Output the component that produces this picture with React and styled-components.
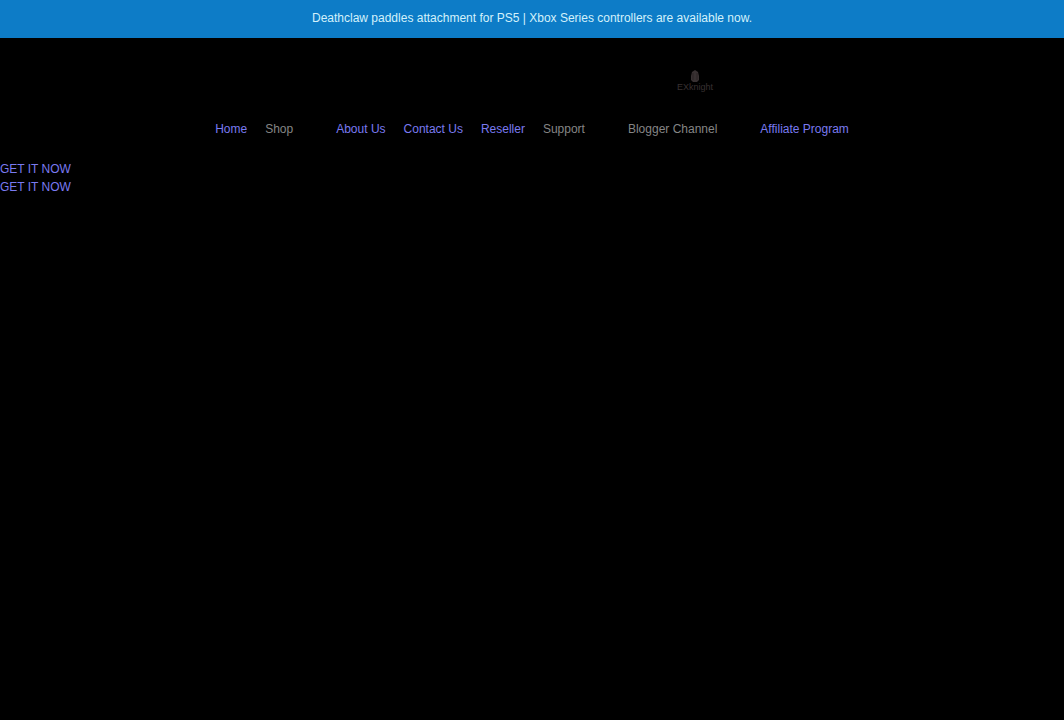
import React from 'react';
import styled, { createGlobalStyle } from 'styled-components';

const GlobalStyle = createGlobalStyle`
  * {
    box-sizing: border-box;
  }

  body {
    margin: 0;
    background: #000;
    font-family: 'Liberation Sans', Arial, sans-serif;
    font-size: 12px;
    line-height: 18px;
  }
`;

const Announcement = styled.p`
  margin: 0;
  padding: 9px 16px 11px;
  background: #0d7cc7;
  color: #d3f1fb;
  text-align: center;
`;

const Header = styled.header`
  padding: 32px 0 22px;
`;

const Brand = styled.div`
  display: grid;
  grid-template-columns: 4fr 9fr;
`;

const LogoLink = styled.a`
  grid-column: 2;
  justify-self: center;
`;

const LogoSvg = styled.svg`
  display: block;
  width: 42px;
  height: 24px;
  fill: #383132;

  text {
    font-family: 'Liberation Sans', Arial, sans-serif;
    font-size: 9px;
    text-anchor: middle;
  }

  .seam {
    fill: none;
    stroke: #1c1819;
    stroke-width: 0.5;
  }
`;

const NavList = styled.ul`
  display: flex;
  flex-wrap: wrap;
  justify-content: center;
  margin: 26px 0 0;
  padding: 0;
  list-style: none;
`;

const NavItem = styled.li`
  padding: 0 ${({ $menu }) => ($menu ? '34px' : '9px')} 0 9px;
`;

const NavLink = styled.a`
  color: #7a7af0;
  text-decoration: none;
`;

const MenuButton = styled.button`
  display: block;
  padding: 0;
  border: 0;
  background: none;
  color: #858585;
  font: inherit;
`;

const SlideLink = styled(NavLink)`
  display: block;
  width: fit-content;
`;

const NAV = [
  { label: 'Home' },
  { label: 'Shop', menu: true },
  { label: 'About Us' },
  { label: 'Contact Us' },
  { label: 'Reseller' },
  { label: 'Support', menu: true },
  { label: 'Blogger Channel', menu: true },
  { label: 'Affiliate Program' }
];

const Logo = () => (
  <LogoSvg viewBox="0 0 42 24" role="img" aria-label="EXknight">
    <path d="M20 0 L23 2 L24 6 L24 10 L22 12 H18 L16 10 L16 6 L17 2 Z" />
    <path className="seam" d="M18 3 V10 M22 3 V10" />
    <text x="20" y="20">
      EXknight
    </text>
  </LogoSvg>
);

const App = () => (
  <>
    <GlobalStyle />
    <Announcement>
      Deathclaw paddles attachment for PS5 | Xbox Series controllers are available now.
    </Announcement>
    <Header>
      <Brand>
        <LogoLink href="#home">
          <Logo />
        </LogoLink>
      </Brand>
      <nav>
        <NavList>
          {NAV.map(({ label, menu }) => (
            <NavItem key={label} $menu={menu}>
              {menu ? (
                <MenuButton type="button" aria-haspopup="true">
                  {label}
                </MenuButton>
              ) : (
                <NavLink href="#">{label}</NavLink>
              )}
            </NavItem>
          ))}
        </NavList>
      </nav>
    </Header>
    <main>
      <SlideLink href="#">GET IT NOW</SlideLink>
      <SlideLink href="#">GET IT NOW</SlideLink>
    </main>
  </>
);

export default App;
